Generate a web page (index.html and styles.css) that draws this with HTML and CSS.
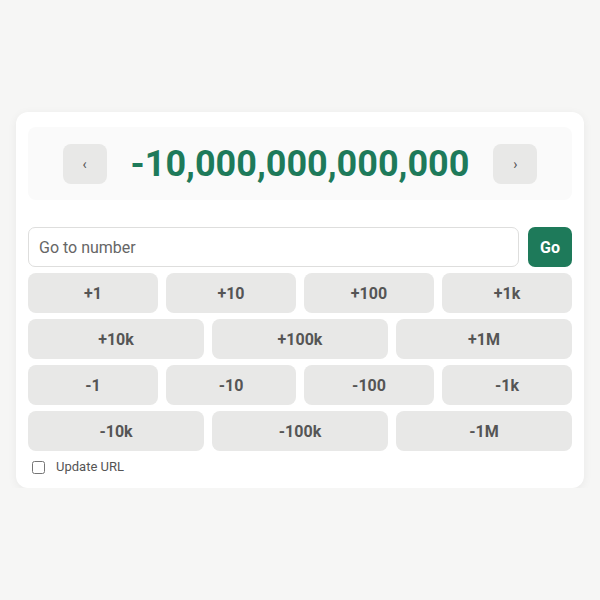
FILE: index.html
```html
<!DOCTYPE html>
<html lang="en">
<head>
    <meta charset="UTF-8">
    <title>Number Browser</title>
    <link rel="stylesheet" href="styles.css">
</head>
<body>
    <div class="card">
        <div class="display">
            <button class="nav-btn">‹</button>
            <div class="number">-10,000,000,000,000</div>
            <button class="nav-btn">›</button>
        </div>

        <div class="goto-row">
            <input type="text" class="goto-input" placeholder="Go to number">
            <button class="go-btn">Go</button>
        </div>

        <div class="step-row four">
            <button class="step-btn">+1</button>
            <button class="step-btn">+10</button>
            <button class="step-btn">+100</button>
            <button class="step-btn">+1k</button>
        </div>
        <div class="step-row three">
            <button class="step-btn">+10k</button>
            <button class="step-btn">+100k</button>
            <button class="step-btn">+1M</button>
        </div>
        <div class="step-row four">
            <button class="step-btn">-1</button>
            <button class="step-btn">-10</button>
            <button class="step-btn">-100</button>
            <button class="step-btn">-1k</button>
        </div>
        <div class="step-row three">
            <button class="step-btn">-10k</button>
            <button class="step-btn">-100k</button>
            <button class="step-btn">-1M</button>
        </div>

        <label class="url-option">
            <input type="checkbox" class="url-check">
            <span>Update URL</span>
        </label>
    </div>
</body>
</html>
```

FILE: styles.css
```css
body {
    font-family: Roboto, 'Liberation Sans', sans-serif;
    margin: 0;
    padding: 112px 16px 0;
    background: #f6f6f5;
    color: #333;
}

button {
    font-family: inherit;
}

.card {
    background: white;
    border-radius: 12px;
    padding: 15px 12px 11px;
    box-shadow: 0 2px 10px rgba(0,0,0,0.06);
}

.display {
    display: flex;
    align-items: center;
    justify-content: center;
    gap: 24px;
    background: #fafafa;
    border-radius: 8px;
    height: 73px;
    margin-bottom: 27px;
}

.nav-btn {
    width: 44px;
    height: 40px;
    border: none;
    border-radius: 8px;
    background: #e8e8e7;
    color: #555;
    font-size: 14px;
    padding: 0;
    cursor: pointer;
}

.number {
    font-size: 36px;
    font-weight: bold;
    color: #1e7a5a;
    line-height: 1;
}

.goto-row {
    display: flex;
    gap: 9px;
    margin-bottom: 6px;
}

.goto-input {
    flex: 1;
    height: 40px;
    box-sizing: border-box;
    border: 1px solid #dededd;
    border-radius: 7px;
    padding: 0 10px;
    font-family: inherit;
    font-size: 16px;
    color: #333;
}

.goto-input::placeholder {
    color: #666;
}

.go-btn {
    width: 44px;
    height: 40px;
    border: none;
    border-radius: 7px;
    background: #1e7a5a;
    color: white;
    font-size: 16px;
    font-weight: bold;
    padding: 0;
}

.step-row {
    display: grid;
    gap: 8px;
    margin-bottom: 6px;
}

.step-row.four {
    grid-template-columns: repeat(4, 1fr);
}

.step-row.three {
    grid-template-columns: repeat(3, 1fr);
}

.step-btn {
    height: 40px;
    border: none;
    border-radius: 8px;
    background: #e8e8e7;
    color: #555;
    font-size: 16px;
    font-weight: bold;
    cursor: pointer;
}

.url-option {
    display: flex;
    align-items: center;
    gap: 11px;
    padding-left: 4px;
    font-size: 13px;
    color: #555;
    line-height: 20px;
}

.url-check {
    width: 13px;
    height: 13px;
    margin: 0;
}
```
